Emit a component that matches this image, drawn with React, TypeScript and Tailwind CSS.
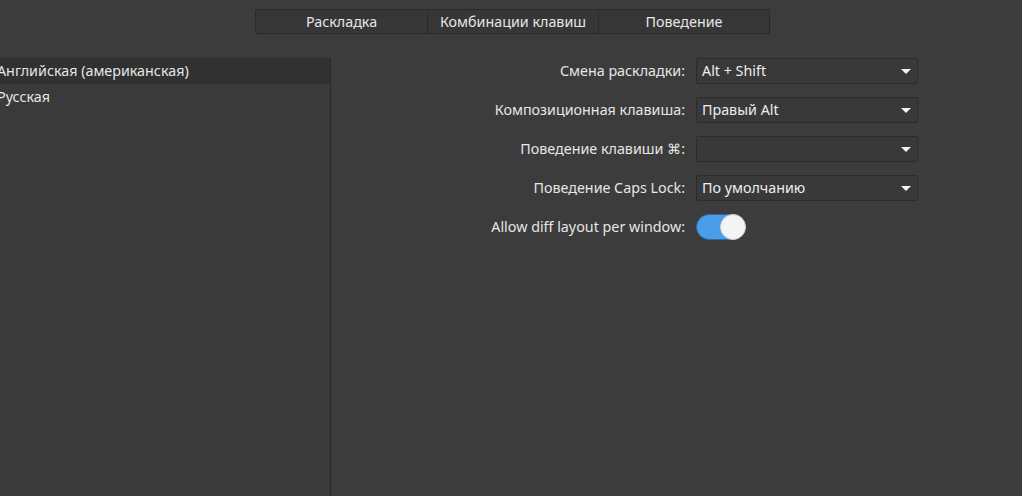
import { useState } from 'react';

const tabs = ['Раскладка', 'Комбинации клавиш', 'Поведение'];

const Combo = ({ value }: { value: string }) => (
    <div className="flex items-center w-[222px] h-[26px] pl-[5px] pr-[6px] bg-[#393939] border border-[#2c2c2c] rounded-[2px] text-[#eeeeee]">
        <span className="flex-1">{value}</span>
        <svg width="10" height="5" viewBox="0 0 10 5">
            <path d="M0 0 H10 L5 5 Z" fill="#f2f2f2" />
        </svg>
    </div>
);

const App = () => {
    const [on, setOn] = useState(true);

    return (
        <div
            className="w-[1022px] h-[496px] bg-[#3c3c3c] flex flex-col text-[14.3px] text-[#e6e6e6] overflow-hidden"
            style={{ fontFamily: '"Noto Sans", "Open Sans", sans-serif' }}
        >
            <div className="flex justify-center pt-[9px] pl-[3px]">
                <div className="flex h-[25px] border border-[#2a2a2a] bg-[#363636] rounded-[2px]">
                    {tabs.map((t, i) => (
                        <div
                            key={t}
                            className={`w-[171px] flex items-center justify-center ${i > 0 ? 'border-l border-[#2a2a2a]' : ''}`}
                        >
                            {t}
                        </div>
                    ))}
                </div>
            </div>

            <div className="flex flex-1 mt-[23px]">
                {/* список раскладок */}
                <div className="w-[331px] border-r border-[#2a2a2a] bg-[#3a3a3a] pt-[1px] flex flex-col">
                    <div className="h-[26px] flex items-center bg-[#313131] -ml-[3px] pl-0">Английская (американская)</div>
                    <div className="h-[25px] flex items-center -ml-[3px]">Русская</div>
                </div>

                <div className="flex-1 flex flex-col gap-[13px] pt-[1px] pr-[104px]">
                    <div className="flex items-center justify-end gap-[11px]">
                        <span>Смена раскладки:</span>
                        <Combo value="Alt + Shift" />
                    </div>
                    <div className="flex items-center justify-end gap-[11px]">
                        <span>Композиционная клавиша:</span>
                        <Combo value="Правый Alt" />
                    </div>
                    <div className="flex items-center justify-end gap-[11px]">
                        <span>Поведение клавиши ⌘:</span>
                        <Combo value="" />
                    </div>
                    <div className="flex items-center justify-end gap-[11px]">
                        <span>Поведение Caps Lock:</span>
                        <Combo value="По умолчанию" />
                    </div>
                    <div className="flex items-center justify-end gap-[11px]">
                        <span>Allow diff layout per window:</span>
                        <div className="w-[222px] flex">
                            <button
                                onClick={() => setOn(!on)}
                                className="relative w-[50px] h-[26px] rounded-full bg-[#4a9de8] border border-[#2b6aa6]"
                            >
                                <span className="absolute right-[-1px] top-[-1px] w-[26px] h-[26px] rounded-full bg-[#f4f4f4] border border-[#cfcfcf]" />
                            </button>
                        </div>
                    </div>
                </div>
            </div>
        </div>
    );
};

export default App;
